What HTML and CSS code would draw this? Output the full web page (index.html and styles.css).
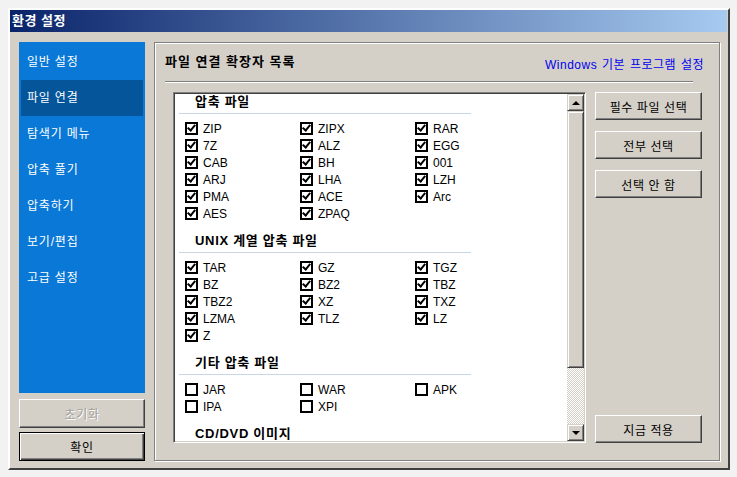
FILE: index.html
```html
<!DOCTYPE html>
<html lang="ko">
<head>
  <meta charset="UTF-8" />
  <title>환경 설정</title>
  <link rel="stylesheet" href="styles.css">
</head>
<body>
  <div class="window">
    <div class="titlebar">환경 설정</div>

    <div class="window-body">
      <div class="side">
        <ul class="nav">
          <li>일반 설정</li>
          <li class="active">파일 연결</li>
          <li>탐색기 메뉴</li>
          <li>압축 풀기</li>
          <li>압축하기</li>
          <li>보기/편집</li>
          <li>고급 설정</li>
        </ul>
        <button class="btn side-btn" disabled>초기화</button>
        <button class="btn side-btn default">확인</button>
      </div>

      <div class="group">
        <div class="group-head">
          <h2>파일 연결 확장자 목록</h2>
          <a href="#" class="link">Windows 기본 프로그램 설정</a>
        </div>
        <div class="group-line"></div>

        <div class="group-body">
          <div class="listbox">
            <div class="list-content">
              <section class="ext-section first">
                <h3>압축 파일</h3>
                <div class="ext-grid">
                  <label class="ext"><span class="chk on"></span>ZIP</label>
                  <label class="ext"><span class="chk on"></span>ZIPX</label>
                  <label class="ext"><span class="chk on"></span>RAR</label>
                  <label class="ext"><span class="chk on"></span>7Z</label>
                  <label class="ext"><span class="chk on"></span>ALZ</label>
                  <label class="ext"><span class="chk on"></span>EGG</label>
                  <label class="ext"><span class="chk on"></span>CAB</label>
                  <label class="ext"><span class="chk on"></span>BH</label>
                  <label class="ext"><span class="chk on"></span>001</label>
                  <label class="ext"><span class="chk on"></span>ARJ</label>
                  <label class="ext"><span class="chk on"></span>LHA</label>
                  <label class="ext"><span class="chk on"></span>LZH</label>
                  <label class="ext"><span class="chk on"></span>PMA</label>
                  <label class="ext"><span class="chk on"></span>ACE</label>
                  <label class="ext"><span class="chk on"></span>Arc</label>
                  <label class="ext"><span class="chk on"></span>AES</label>
                  <label class="ext"><span class="chk on"></span>ZPAQ</label>
                </div>
              </section>

              <section class="ext-section">
                <h3>UNIX 계열 압축 파일</h3>
                <div class="ext-grid">
                  <label class="ext"><span class="chk on"></span>TAR</label>
                  <label class="ext"><span class="chk on"></span>GZ</label>
                  <label class="ext"><span class="chk on"></span>TGZ</label>
                  <label class="ext"><span class="chk on"></span>BZ</label>
                  <label class="ext"><span class="chk on"></span>BZ2</label>
                  <label class="ext"><span class="chk on"></span>TBZ</label>
                  <label class="ext"><span class="chk on"></span>TBZ2</label>
                  <label class="ext"><span class="chk on"></span>XZ</label>
                  <label class="ext"><span class="chk on"></span>TXZ</label>
                  <label class="ext"><span class="chk on"></span>LZMA</label>
                  <label class="ext"><span class="chk on"></span>TLZ</label>
                  <label class="ext"><span class="chk on"></span>LZ</label>
                  <label class="ext"><span class="chk on"></span>Z</label>
                </div>
              </section>

              <section class="ext-section">
                <h3>기타 압축 파일</h3>
                <div class="ext-grid">
                  <label class="ext"><span class="chk"></span>JAR</label>
                  <label class="ext"><span class="chk"></span>WAR</label>
                  <label class="ext"><span class="chk"></span>APK</label>
                  <label class="ext"><span class="chk"></span>IPA</label>
                  <label class="ext"><span class="chk"></span>XPI</label>
                </div>
              </section>

              <section class="ext-section">
                <h3>CD/DVD 이미지</h3>
              </section>
            </div>

            <div class="scrollbar">
              <div class="sb-btn"><span class="arrow up"></span></div>
              <div class="sb-thumb"></div>
              <div class="sb-track"></div>
              <div class="sb-btn"><span class="arrow down"></span></div>
            </div>
          </div>

          <div class="actions">
            <button class="btn">필수 파일 선택</button>
            <button class="btn">전부 선택</button>
            <button class="btn">선택 안 함</button>
            <button class="btn apply">지금 적용</button>
          </div>
        </div>
      </div>
    </div>
  </div>
</body>
</html>
```

FILE: styles.css
```css
body {
  margin: 0;
  background: #f2f2f2;
  font-family: 'Liberation Sans', 'Noto Sans CJK KR', sans-serif;
  font-size: 12px;
  color: #000;
}

.window {
  box-sizing: border-box;
  width: 722px;
  height: 462px;
  margin: 8px;
  border: 2px solid;
  border-color: #fff #404040 #404040 #fff;
  background: #d4d0c8;
}

.titlebar {
  height: 22px;
  line-height: 22px;
  margin-right: 1px;
  padding-left: 2px;
  background: linear-gradient(90deg, #0a246a, #a6caf0);
  color: #fff;
  font-size: 13px;
  font-weight: bold;
  letter-spacing: 0.5px;
}

.window-body {
  display: flex;
  padding: 10px 0 0 9px;
}

.side {
  width: 126px;
  display: flex;
  flex-direction: column;
}

.nav {
  list-style: none;
  margin: 0;
  padding: 2px;
  height: 347px;
  background: #0a78d6;
}

.nav li {
  height: 36px;
  line-height: 36px;
  padding-left: 6px;
  color: #fff;
  font-size: 12px;
  letter-spacing: 0.8px;
}

.nav li.active {
  background: #05559a;
}

.btn {
  box-sizing: border-box;
  height: 28px;
  padding: 0;
  background: #d4d0c8;
  border: 1px solid;
  border-color: #fff #404040 #404040 #fff;
  box-shadow: inset -1px -1px #808080;
  font-family: 'Liberation Sans', 'Noto Sans CJK KR', sans-serif;
  font-size: 12px;
  letter-spacing: 0.6px;
  color: #000;
}

.side-btn {
  height: 29px;
  margin-top: 6px;
}

.side-btn:disabled {
  color: #a3a19c;
  text-shadow: 1px 1px #fff;
}

.side-btn.default {
  margin-top: 4px;
  border: 1px solid #000;
  box-shadow: inset 1px 1px #fff, inset -1px -1px #404040, inset -2px -2px #808080;
}

.group {
  box-sizing: border-box;
  width: 566px;
  height: 419px;
  margin-left: 9px;
  border: 1px solid #808080;
  box-shadow: inset 1px 1px #fff, 1px 1px #fff;
}

.group-head {
  display: flex;
  justify-content: space-between;
  margin: 11px 15px 0 10px;
  height: 16px;
}

.group-head h2 {
  margin: 0;
  font-size: 13px;
  line-height: 16px;
  font-weight: bold;
  letter-spacing: 1px;
}

.link {
  padding-top: 3px;
  color: #0000ee;
  text-decoration: none;
  font-size: 12px;
  line-height: 16px;
  letter-spacing: 0.5px;
  word-spacing: 1px;
}

.group-line {
  margin: 11px 26px 0 10px;
  border-top: 1px solid #808080;
  border-bottom: 1px solid #fff;
}

.group-body {
  display: flex;
  margin: 9px 0 0 18px;
}

.listbox {
  box-sizing: border-box;
  width: 413px;
  height: 351px;
  display: flex;
  background: #fff;
  border: 1px solid;
  border-color: #808080 #fff #fff #808080;
  box-shadow: inset 1px 1px #404040, inset -1px -1px #d4d0c8;
  padding: 1px;
}

.list-content {
  flex: 1;
  overflow: hidden;
}

.ext-section {
  margin-top: 10px;
}

.ext-section.first {
  margin-top: -1px;
}

.ext-section h3 {
  width: 276px;
  margin: 0 0 0 4px;
  padding: 0 0 3px 16px;
  line-height: 17px;
  font-size: 13px;
  font-weight: bold;
  letter-spacing: 0.7px;
  border-bottom: 1px solid #c8d6e6;
}

.ext-grid {
  display: grid;
  grid-template-columns: repeat(3, 115px);
  margin-top: 6px;
  padding-left: 10px;
}

.ext {
  display: flex;
  align-items: center;
  height: 17px;
  font-size: 12px;
}

.chk {
  position: relative;
  box-sizing: border-box;
  width: 13px;
  height: 13px;
  margin-right: 5px;
  border: 2px solid #000;
  background: #fff;
}

.chk.on::after {
  content: '';
  position: absolute;
  left: 2px;
  top: -1px;
  width: 3px;
  height: 6px;
  border-right: 2px solid #000;
  border-bottom: 2px solid #000;
  transform: rotate(40deg);
}

.scrollbar {
  width: 17px;
  display: flex;
  flex-direction: column;
}

.sb-btn,
.sb-thumb {
  box-sizing: border-box;
  background: #d4d0c8;
  border: 1px solid;
  border-color: #d4d0c8 #404040 #404040 #d4d0c8;
  box-shadow: inset 1px 1px #fff, inset -1px -1px #808080;
}

.sb-btn {
  height: 17px;
  display: flex;
  align-items: center;
  justify-content: center;
}

.sb-thumb {
  height: 257px;
}

.sb-track {
  flex: 1;
  background: repeating-conic-gradient(#fff 0 25%, #d4d0c8 0 50%) 0 0 / 2px 2px;
}

.arrow {
  width: 0;
  height: 0;
  border-left: 4px solid transparent;
  border-right: 4px solid transparent;
}

.arrow.up {
  border-bottom: 4px solid #000;
}

.arrow.down {
  border-top: 4px solid #000;
}

.actions {
  display: flex;
  flex-direction: column;
  margin-left: 9px;
  width: 107px;
}

.actions .btn {
  margin-bottom: 11px;
}

.actions .apply {
  margin-top: auto;
  margin-bottom: 0;
}
```
